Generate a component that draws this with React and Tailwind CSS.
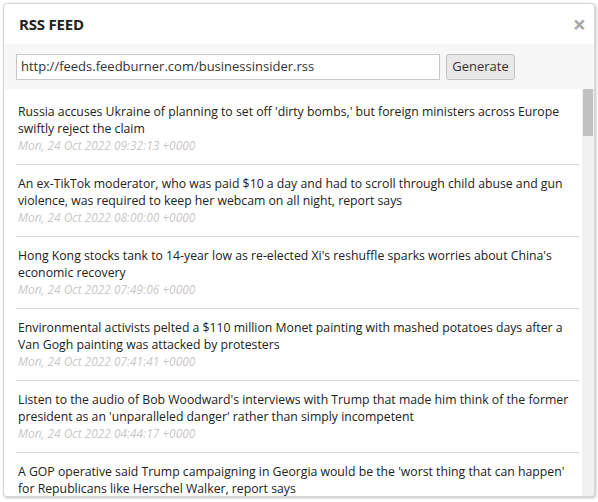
import React from "react";

const items = [
  {
    lines: [
      "Russia accuses Ukraine of planning to set off 'dirty bombs,' but foreign ministers across Europe",
      "swiftly reject the claim",
    ],
    date: "Mon, 24 Oct 2022 09:32:13 +0000",
  },
  {
    lines: [
      "An ex-TikTok moderator, who was paid $10 a day and had to scroll through child abuse and gun",
      "violence, was required to keep her webcam on all night, report says",
    ],
    date: "Mon, 24 Oct 2022 08:00:00 +0000",
  },
  {
    lines: [
      "Hong Kong stocks tank to 14-year low as re-elected Xi's reshuffle sparks worries about China's",
      "economic recovery",
    ],
    date: "Mon, 24 Oct 2022 07:49:06 +0000",
  },
  {
    lines: [
      "Environmental activists pelted a $110 million Monet painting with mashed potatoes days after a",
      "Van Gogh painting was attacked by protesters",
    ],
    date: "Mon, 24 Oct 2022 07:41:41 +0000",
  },
  {
    lines: [
      "Listen to the audio of Bob Woodward's interviews with Trump that made him think of the former",
      "president as an 'unparalleled danger' rather than simply incompetent",
    ],
    date: "Mon, 24 Oct 2022 04:44:17 +0000",
  },
  {
    lines: [
      "A GOP operative said Trump campaigning in Georgia would be the 'worst thing that can happen'",
      "for Republicans like Herschel Walker, report says",
    ],
    date: "Mon, 24 Oct 2022 03:12:55 +0000",
  },
];

export default function App() {
  return (
    <div
      className="w-[598px] h-[502px] bg-white p-[3px] pb-[5px] pr-[3px]"
      style={{ fontFamily: '"Open Sans", "Noto Sans", sans-serif' }}
    >
      <div className="w-[592px] h-[494px] flex flex-col bg-white border border-[#d6d6d6] rounded-[4px] shadow-[1px_1px_3px_rgba(0,0,0,0.25)] overflow-hidden">
        <div className="h-[40px] shrink-0 flex items-center justify-between pl-[15px] pr-[8px]">
          <div className="text-[15px] font-bold text-[#222] tracking-[-0.2px]">RSS FEED</div>
          <div className="text-[23px] font-bold text-[#a8a8a8] leading-none">×</div>
        </div>
        <div className="h-[45px] shrink-0 bg-[#f7f7f7] flex items-center pl-[12px] gap-[6px]">
          <div className="w-[424px] h-[26px] bg-white border border-[#c8c8c8] flex items-center pl-[4px] text-[13px] text-[#333]">
            http://feeds.feedburner.com/businessinsider.rss
          </div>
          <div className="w-[69px] h-[26px] bg-[#e8e8e8] border border-[#c4c4c4] rounded-[3px] flex items-center justify-center text-[13px] text-[#333]">
            Generate
          </div>
        </div>
        <div className="flex-1 flex min-h-0">
          <div className="flex-1 overflow-hidden pt-[4px] pl-[12px] pr-[3px]">
            {items.map((it, i) => (
              <div key={i} className="border-b border-[#d8d8d8] pt-[10px] pb-[10px] pl-[2px]">
                {it.lines.map((l, j) => (
                  <div key={j} className="whitespace-nowrap text-[12.25px] leading-[17px] text-[#222]">
                    {l}
                  </div>
                ))}
                <div className="text-[11.9px] leading-[17px] italic text-[#c8c8c8]">{it.date}</div>
              </div>
            ))}
          </div>
          <div className="w-[12px] shrink-0 bg-[#f1f1f1]">
            <div className="h-[47px] mx-[1px] bg-[#c1c1c1]" />
          </div>
        </div>
      </div>
    </div>
  );
}
